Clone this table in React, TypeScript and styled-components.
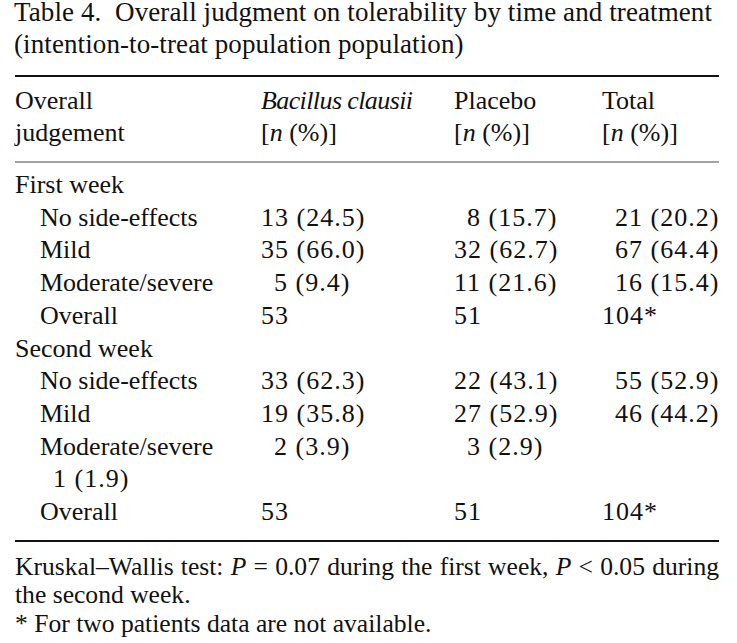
import React, { FC } from 'react';
import styled, { createGlobalStyle } from 'styled-components';

const GlobalStyle = createGlobalStyle`
  html, body {
    margin: 0;
    padding: 0;
    background: #ffffff;
  }
  body {
    font-family: 'Liberation Serif', 'Times New Roman', serif;
    color: #111111;
    overflow: hidden;
  }
`;

const Page = styled.div`
  width: 737px;
  height: 643px;
  padding: 0 18px 0 15px;
  box-sizing: border-box;
  font-size: 26px;
`;

const Caption = styled.div`
  display: flex;
  flex-direction: column;
  gap: 8px;
  margin-left: -1px;
  font-size: 27px;
  letter-spacing: 0.1px;
  line-height: 24px;
  white-space: nowrap;
`;

const Rule = styled.div<{ grey?: boolean }>`
  height: 2px;
  background: ${({ grey }) => (grey ? '#a3a3a3' : '#111111')};
`;

const TopRule = styled(Rule)`
  margin-top: 19px;
`;

const Grid = styled.div<{ pad: string; rowHeight: string }>`
  display: grid;
  grid-template-columns: 246px 193px 148px 1fr;
  padding: ${({ pad }) => pad};
  line-height: ${({ rowHeight }) => rowHeight};
`;

const Cell = styled.div<{ indent?: number }>`
  white-space: nowrap;
  padding-left: ${({ indent }) => indent ?? 0}px;
`;

const Species = styled.i`
  letter-spacing: -0.6px;
`;

const Section = styled.div`
  grid-column: 1 / -1;
`;

const Num = styled.span<{ pad?: boolean }>`
  letter-spacing: 1px;
  padding-left: ${({ pad }) => (pad ? '13px' : '0')};
`;

const Notes = styled.div`
  padding-top: 11px;
  font-size: 25.6px;
  line-height: 28.4px;
  text-align: justify;
`;

type Val = [string, boolean];
type Row = { label: string; b?: Val; p?: Val; t?: Val };

const firstWeek: Row[] = [
  { label: 'No side-effects', b: ['13 (24.5)', false], p: ['8 (15.7)', true], t: ['21 (20.2)', true] },
  { label: 'Mild', b: ['35 (66.0)', false], p: ['32 (62.7)', false], t: ['67 (64.4)', true] },
  { label: 'Moderate/severe', b: ['5 (9.4)', true], p: ['11 (21.6)', false], t: ['16 (15.4)', true] },
  { label: 'Overall', b: ['53', false], p: ['51', false], t: ['104*', false] },
];

const secondWeek: Row[] = [
  { label: 'No side-effects', b: ['33 (62.3)', false], p: ['22 (43.1)', false], t: ['55 (52.9)', true] },
  { label: 'Mild', b: ['19 (35.8)', false], p: ['27 (52.9)', false], t: ['46 (44.2)', true] },
  { label: 'Moderate/severe', b: ['2 (3.9)', true], p: ['3 (2.9)', true] },
];

const Value: FC<{ v?: Val }> = ({ v }) => (
  <Cell>{v ? <Num pad={v[1]}>{v[0]}</Num> : null}</Cell>
);

const renderRows = (rows: Row[]) =>
  rows.map((r, i) => (
    <React.Fragment key={i}>
      <Cell indent={25}>{r.label}</Cell>
      <Value v={r.b} />
      <Value v={r.p} />
      <Value v={r.t} />
    </React.Fragment>
  ));

const App: FC = () => (
  <Page>
    <GlobalStyle />
    <Caption>
      <div>Table 4.&nbsp; Overall judgment on tolerability by time and treatment</div>
      <div>(intention-to-treat population population)</div>
    </Caption>
    <TopRule />
    <Grid pad="8px 0 12px" rowHeight="32px">
      <Cell>Overall</Cell>
      <Cell>
        <Species>Bacillus clausii</Species>
      </Cell>
      <Cell>Placebo</Cell>
      <Cell>Total</Cell>
      <Cell>judgement</Cell>
      <Cell>
        [<i>n</i> (%)]
      </Cell>
      <Cell>
        [<i>n</i> (%)]
      </Cell>
      <Cell>
        [<i>n</i> (%)]
      </Cell>
    </Grid>
    <Rule grey />
    <Grid pad="6px 0 11px" rowHeight="32.7px">
      <Section>First week</Section>
      {renderRows(firstWeek)}
      <Section>Second week</Section>
      {renderRows(secondWeek)}
      <Cell indent={25}>
        <Num pad>1 (1.9)</Num>
      </Cell>
      <Cell />
      <Cell />
      <Cell />
      <Cell indent={25}>Overall</Cell>
      <Value v={['53', false]} />
      <Value v={['51', false]} />
      <Value v={['104*', false]} />
    </Grid>
    <Rule />
    <Notes>
      Kruskal–Wallis test: <i>P</i> = 0.07 during the first week, <i>P</i> &lt; 0.05 during the
      second week.
      <br />* For two patients data are not available.
    </Notes>
  </Page>
);

export default App;
